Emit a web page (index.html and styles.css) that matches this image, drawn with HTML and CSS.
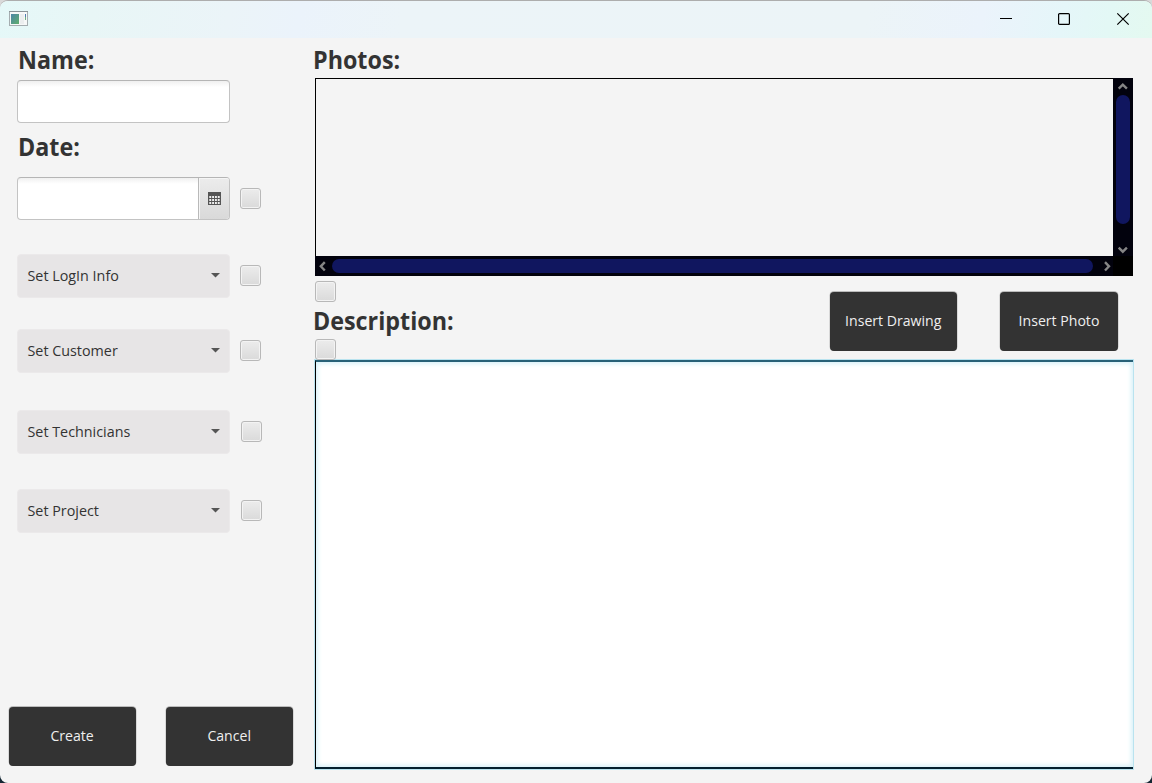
FILE: index.html
```html
<!DOCTYPE html>
<html lang="en">
<head>
<meta charset="utf-8">
<title>Create entry</title>
<link rel="stylesheet" href="styles.css">
</head>
<body>
<div class="window">
  <header class="titlebar">
    <svg class="app-icon" width="19" height="15" viewBox="0 0 19 15">
      <defs><linearGradient id="pane" x1="0" y1="0" x2="1" y2="1"><stop offset="0" stop-color="#4d86a8"/><stop offset="1" stop-color="#5fae6c"/></linearGradient></defs>
      <rect x=".5" y=".5" width="18" height="14" fill="#f7f8f8" stroke="#a5adb0"/>
      <path d="M0 .5h19" stroke="#8b9498"/>
      <rect x="2" y="3" width="8" height="10" fill="url(#pane)"/>
      <rect x="11" y="3" width="4" height="10" fill="#eceeef"/>
      <path d="M16.5 3v3" stroke="#4d7fb0"/><path d="M16.5 6v3" stroke="#6eb080"/>
    </svg>
    <div class="controls">
      <svg width="14" height="14" viewBox="0 0 14 14"><path d="M1 6.5h12" stroke="#000"/></svg>
      <svg width="14" height="14" viewBox="0 0 14 14"><rect x="1.6" y="1.6" width="10.8" height="10.8" rx="1" fill="none" stroke="#000" stroke-width="1.2"/></svg>
      <svg width="14" height="14" viewBox="0 0 14 14"><path d="M1.3 1.3l11.4 11.4M12.7 1.3L1.3 12.7" stroke="#000" stroke-width="1.2"/></svg>
    </div>
  </header>
  <main class="content">
    <section class="sidebar">
      <h2 class="label"><span>Name:</span></h2>
      <div class="input"></div>
      <h2 class="label date-label"><span>Date:</span></h2>
      <div class="row date-row">
        <div class="input date-input">
          <div class="calendar">
            <svg width="13" height="13" viewBox="0 0 13 13"><rect width="13" height="13" fill="#555"/><path d="M1.3 5h10.4M1.3 8h10.4M1.3 11h10.4" stroke="#efefef" stroke-width="2" stroke-dasharray="1.9 .93"/></svg>
          </div>
        </div>
        <div class="check"></div>
      </div>
      <div class="row login-row"><div class="combo"><span class="text">Set LogIn Info</span><i class="arrow"></i></div><div class="check"></div></div>
      <div class="row customer-row"><div class="combo"><span class="text">Set Customer</span><i class="arrow"></i></div><div class="check"></div></div>
      <div class="row technician-row"><div class="combo"><span class="text">Set Technicians</span><i class="arrow"></i></div><div class="check"></div></div>
      <div class="row project-row"><div class="combo"><span class="text">Set Project</span><i class="arrow"></i></div><div class="check"></div></div>
      <div class="actions"><div class="button"><span>Create</span></div><div class="button"><span>Cancel</span></div></div>
    </section>
    <section class="details">
      <h2 class="label photos-label"><span>Photos:</span></h2>
      <div class="photos">
        <div class="viewport"></div>
        <div class="vbar">
          <svg width="20" height="17" viewBox="0 0 20 17"><path d="M5.7 10.7L9.8 6.7l4.1 4" fill="none" stroke="#858585" stroke-width="2.4"/></svg>
          <div class="vthumb"></div>
          <svg width="20" height="32" viewBox="0 0 20 32"><path d="M5.7 23.7l4.1 4 4.1-4" fill="none" stroke="#858585" stroke-width="2.4"/></svg>
        </div>
        <div class="hbar">
          <svg width="17" height="20" viewBox="0 0 17 20"><path d="M9.8 6.2L5.8 10.3l4 4.2" fill="none" stroke="#858585" stroke-width="2.4"/></svg>
          <div class="hthumb"></div>
          <svg width="20" height="20" viewBox="0 0 20 20"><path d="M12 6.2l4 4.1-4 4.2" fill="none" stroke="#858585" stroke-width="2.4"/></svg>
        </div>
        <div class="corner"></div>
      </div>
      <div class="toolbar">
        <div class="toolbar-left">
          <div class="check"></div>
          <h2 class="label desc-label"><span>Description:</span></h2>
          <div class="check desc-check"></div>
        </div>
        <div class="insert">
          <div class="button drawing"><span>Insert Drawing</span></div>
          <div class="button photo"><span>Insert Photo</span></div>
        </div>
      </div>
      <div class="textarea"></div>
    </section>
  </main>
</div>
</body>
</html>
```
FILE: styles.css
```css
* { box-sizing: border-box; }
body { margin: 0; height: 783px; overflow: hidden; background: linear-gradient(#d9d9d9 0 50%, #142632 50%); font: 15px/20px "Open Sans", "Noto Sans", sans-serif; color: #333; }
.window { height: 783px; display: flex; flex-direction: column; background: #f4f4f4; border-top: 1px solid #adadad; border-radius: 8px; overflow: hidden; }
.titlebar { height: 37px; flex: none; display: flex; justify-content: space-between; align-items: center; padding: 0 22px 2px 9px; background: linear-gradient(100deg, #e5f8f8 0, #e8f6f6 8%, #ebf4f8 20%, #ebf3fb 26%, #ecf4f8 35%, #ecf4f7 75%, #ebf3fb 85%, #e5f6f9 92%, #e3f8f5 96%, #e4f9f0 100%); }
.app-icon { display: block; }
.controls { display: flex; gap: 44.5px; }
.controls svg { display: block; }
.controls svg:nth-child(2) { margin: 0 .5px 0 -.5px; }
.content { flex: 1; display: flex; min-height: 0; }
.sidebar { width: 315px; flex: none; padding: 3px 0 0 17px; display: flex; flex-direction: column; }
.label { margin: 0; padding-left: 1px; height: 36px; font-size: 25px; line-height: 36px; font-weight: 700; white-space: nowrap; }
.label span, .text { display: inline-block; transform-origin: 0 50%; }
.label span { transform: scaleX(.932); }
.text { font-weight: 400; transform: translateX(.5px) scaleX(.955); white-space: nowrap; }
.button span { display: inline-block; transform: translateY(-2px) scaleX(.94); white-space: nowrap; }
.input { width: 213px; height: 43px; margin-top: 3px; flex: none; border: 1px solid #c3c3c3; border-top-color: #b5b5b5; border-radius: 4px; background: linear-gradient(#f0f0f0 0, #fff 6px); }
.date-label { margin-top: 5px; }
.row { display: flex; align-items: center; gap: 9px; flex: none; }
.date-row { margin-top: 12px; height: 44px; }
.date-input { margin: 1px 1px 0 0; display: flex; justify-content: flex-end; }
.calendar { width: 31px; padding-bottom: 1px; border-left: 1px solid #b9b9b9; border-radius: 0 3px 3px 0; background: linear-gradient(#ececec, #d9d9d9); box-shadow: inset 1px 1px #f5f5f5; display: flex; align-items: center; justify-content: center; }
.check { width: 21px; height: 21px; flex: none; border: 1px solid #b8b8b8; border-radius: 3px; background: linear-gradient(#ececec, #dadada); box-shadow: inset 0 0 0 1px #f3f3f3; }
.row .combo + .check { margin-bottom: 2px; }
.combo { width: 213px; height: 44px; margin-right: 1px; padding: 0 9px 2px; display: flex; align-items: center; justify-content: space-between; background: #e7e5e6; border: 1px solid #ebe9ea; border-radius: 4px; }
.arrow { width: 10px; height: 5px; margin-right: -.5px; background: #555; clip-path: polygon(0 0, 100% 0, 50% 100%); }
.login-row { margin-top: 34px; }
.customer-row { margin-top: 31px; }
.technician-row { margin-top: 37px; gap: 10px; }
.project-row { margin-top: 35px; gap: 10px; }
.actions { display: flex; gap: 30px; margin: 174px 0 0 -8px; }
.button { width: 127px; height: 59px; flex: none; display: flex; align-items: center; justify-content: center; background: #333; color: #efefef; border-radius: 4px; box-shadow: 0 -.5px 0 .5px #bbb; }
.details { width: 819px; padding-top: 3px; display: flex; flex-direction: column; }
.photos-label, .desc-label { padding: 0; margin-left: -2px; }
.photos { height: 198px; margin-top: 1px; width: 818px; flex: none; display: grid; grid-template: 178px 20px / 798px 20px; }
.viewport { border: solid #000; border-width: 1px 0 0 1px; }
.vbar { height: 178px; background: #02020d; display: flex; flex-direction: column; }
.vthumb { flex: 1; margin: 0 3px; border-radius: 7px; background: #10165f; }
.vbar svg, .hbar svg { display: block; flex: none; }
.hbar { background: #02020d; display: flex; }
.hthumb { flex: 1; margin: 3px 0 3px 0; border-radius: 7px; background: #10165f; }
.corner { background: #000; }
.toolbar { height: 84px; flex: none; display: flex; justify-content: space-between; }
.toolbar-left { padding-top: 5px; }
.desc-label { margin-top: 0; }
.desc-check { position: relative; z-index: 1; margin-top: 1px; }
.insert { display: flex; gap: 43px; padding: 16px 16px 0 0; }
.photo { width: 118px; }
.textarea { width: 818px; height: 409px; flex: none; background: #fff; border: solid #000; border-width: 2px 0 2px 1px; border-top-color: #286177; border-bottom-color: #05202e; box-shadow: 0 0 0 1px #b9e3ef, inset 0 0 4px 2px #d8f1f8; }
```
